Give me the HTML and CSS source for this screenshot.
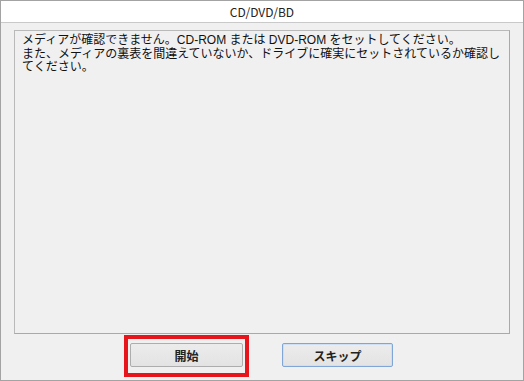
FILE: index.html
```html
<!DOCTYPE html>
<html lang="ja">
<head>
  <meta charset="UTF-8">
  <meta name="viewport" content="width=device-width, initial-scale=1.0">
  <title>CD/DVD/BD</title>
  <link rel="stylesheet" href="styles.css">
</head>
<body>
  <!-- Dialog window -->
  <div class="window">
    <div class="titlebar">CD/DVD/BD</div>

    <div class="content">
      <!-- Message box -->
      <div class="message">
        <p>メディアが確認できません。CD-ROM または DVD-ROM をセットしてください。<br>また、メディアの裏表を間違えていないか、ドライブに確実にセットされているか確認してください。</p>
      </div>

      <!-- Buttons -->
      <div class="actions">
        <div class="highlight">
          <button class="btn">開始</button>
        </div>
        <button class="btn btn-default">スキップ</button>
      </div>
    </div>
  </div>
</body>
</html>
```

FILE: styles.css
```css
/* Global Styles */
* {
  margin: 0;
  padding: 0;
  box-sizing: border-box;
}

body {
  font-family: "Noto Sans CJK JP", "Noto Sans", sans-serif;
  font-size: 12px;
  color: #1a1a1a;
  background: #ffffff;
}

/* Window */
.window {
  width: 524px;
  height: 381px;
  border: 1px solid #a3a3a3;
  background: #f0f0f0;
  display: flex;
  flex-direction: column;
}

.titlebar {
  height: 22px;
  background: #ffffff;
  border-bottom: 1px solid #c9c9c9;
  text-align: center;
  line-height: 21px;
  font-size: 12px;
  color: #222;
}

.content {
  flex: 1;
  padding: 7px 13px 0 13px;
  display: flex;
  flex-direction: column;
}

/* Message box */
.message {
  height: 304px;
  border: 1px solid #b9b9b9;
  border-right-color: #a9a9a9;
  border-bottom-color: #a9a9a9;
  background: #f0f0f0;
  padding: 3px 8px 0 7px;
  font-family: "Liberation Sans", "Noto Sans CJK JP", sans-serif;
  font-size: 12px;
  line-height: 13.5px;
  color: #111;
}

.message p {
  white-space: normal;
  line-break: strict;
}

/* Buttons */
.actions {
  display: flex;
  align-items: center;
  padding-left: 110px;
  gap: 33px;
  margin-top: 1px;
}

.highlight {
  border: 4px solid #e8141c;
  padding: 4px 2px 6px 2px;
}

.btn {
  width: 113px;
  height: 24px;
  font-family: "Noto Sans CJK JP", sans-serif;
  font-size: 12px;
  font-weight: bold;
  color: #222;
  background: linear-gradient(#ececec, #e3e3e3);
  border: 1px solid #adadad;
  border-radius: 2px;
  cursor: pointer;
}

.btn-default {
  width: 111px;
  margin-top: -2px;
  border: 1px solid #7fa6d6;
  box-shadow: inset 0 0 0 1px #cfe0f4;
}
```
